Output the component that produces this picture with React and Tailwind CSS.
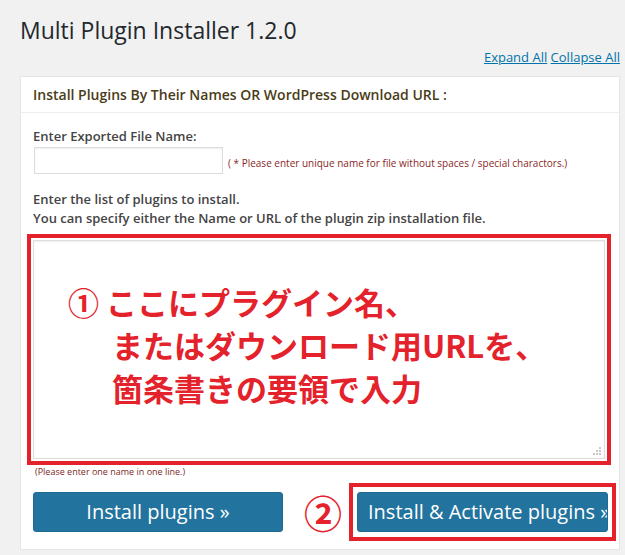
import React from 'react';

const App = () => {
  return (
    <div className="min-h-screen bg-[#f1f1f1] pl-5 pr-[4px] font-['Open_Sans',sans-serif] text-[#444]">
      {/* Page title */}
      <h1 className="pt-[14px] text-[23px] leading-[32px] font-normal text-[#23282d]">
        Multi Plugin Installer 1.2.0
      </h1>

      <div className="mt-[2px] text-right text-[13px] leading-[18px] pr-[1px]">
        <a href="#" className="text-[#0073aa] underline">Expand All</a>{' '}
        <a href="#" className="text-[#0073aa] underline">Collapse All</a>
      </div>

      {/* Postbox */}
      <div className="mt-[10px] mr-[1px] border border-[#e5e5e5] bg-white">
        <div className="border-b border-[#eeeeee] px-3 py-[10px]">
          <h3 className="text-[14px] leading-[15px] font-semibold text-[#4a3c17]">
            Install Plugins By Their Names OR WordPress Download URL :
          </h3>
        </div>

        <div className="px-3 pt-[14px] pb-[8px]">
          <label className="block text-[13px] leading-[18px] font-semibold text-[#444]">
            Enter Exported File Name:
          </label>
          <div className="mt-[2px] flex items-end">
            <input
              type="text"
              className="ml-[1px] h-[27px] w-[189px] shrink-0 border border-[#dddddd] bg-white shadow-[inset_0_1px_2px_rgba(0,0,0,0.07)] outline-none"
            />
            <span className="ml-[5px] mb-[5px] text-[10px] leading-[12px] text-[#8a1f1f]">
              ( * Please enter unique name for file without spaces / special charactors.)
            </span>
          </div>

          <p className="mt-[16px] text-[13px] leading-[19px] font-semibold text-[#444]">
            Enter the list of plugins to install.
            <br />
            You can specify either the Name or URL of the plugin zip installation file.
          </p>

          {/* Annotated textarea */}
          <div className="mt-[6px] -ml-[6px] w-[584px] border-4 border-[#e4222b] p-[2px]">
            <div className="relative h-[219px] border border-[#dddddd] bg-white shadow-[inset_0_1px_2px_rgba(0,0,0,0.07)] pt-[39px] font-['Noto_Sans_CJK_JP',sans-serif] text-[31px] leading-[43px] font-bold text-[#e4222b]">
              <p className="pl-[34px]">① ここにプラグイン名、</p>
              <p className="pl-[78px]">またはダウンロード用URLを、</p>
              <p className="pl-[78px]">箇条書きの要領で入力</p>
              <svg className="absolute right-[2px] bottom-[2px]" width="9" height="9" viewBox="0 0 9 9">
                <g fill="#c8c8c8">
                  <rect x="6" y="0" width="2" height="2" />
                  <rect x="3" y="3" width="2" height="2" />
                  <rect x="6" y="3" width="2" height="2" />
                  <rect x="0" y="6" width="2" height="2" />
                  <rect x="3" y="6" width="2" height="2" />
                  <rect x="6" y="6" width="2" height="2" />
                </g>
              </svg>
            </div>
          </div>
          <p className="mt-[1px] pl-[2px] text-[9px] leading-[11px] text-[#7a1f1f]">
            (Please enter one name in one line.)
          </p>

          {/* Buttons */}
          <div className="mt-[6px] flex items-center">
            <button className="h-[40px] w-[250px] shrink-0 rounded-[3px] border border-[#1d6a92] bg-[#22739e] text-[20px] text-white">
              Install plugins »
            </button>
            <span className="ml-[21px] w-[40px] shrink-0 font-['Noto_Sans_CJK_JP',sans-serif] text-[38px] leading-[40px] font-bold text-[#e4222b]">
              ②
            </span>
            <div className="ml-[5px] shrink-0 border-4 border-[#e4222b] px-[4px] py-[5px]">
              <button className="block h-[40px] w-[251px] overflow-hidden whitespace-nowrap rounded-[3px] border border-[#1d6a92] bg-[#22739e] pl-[10px] text-left text-[20px] text-white">
                Install &amp; Activate plugins »
              </button>
            </div>
          </div>
        </div>
      </div>
    </div>
  );
};

export default App;
